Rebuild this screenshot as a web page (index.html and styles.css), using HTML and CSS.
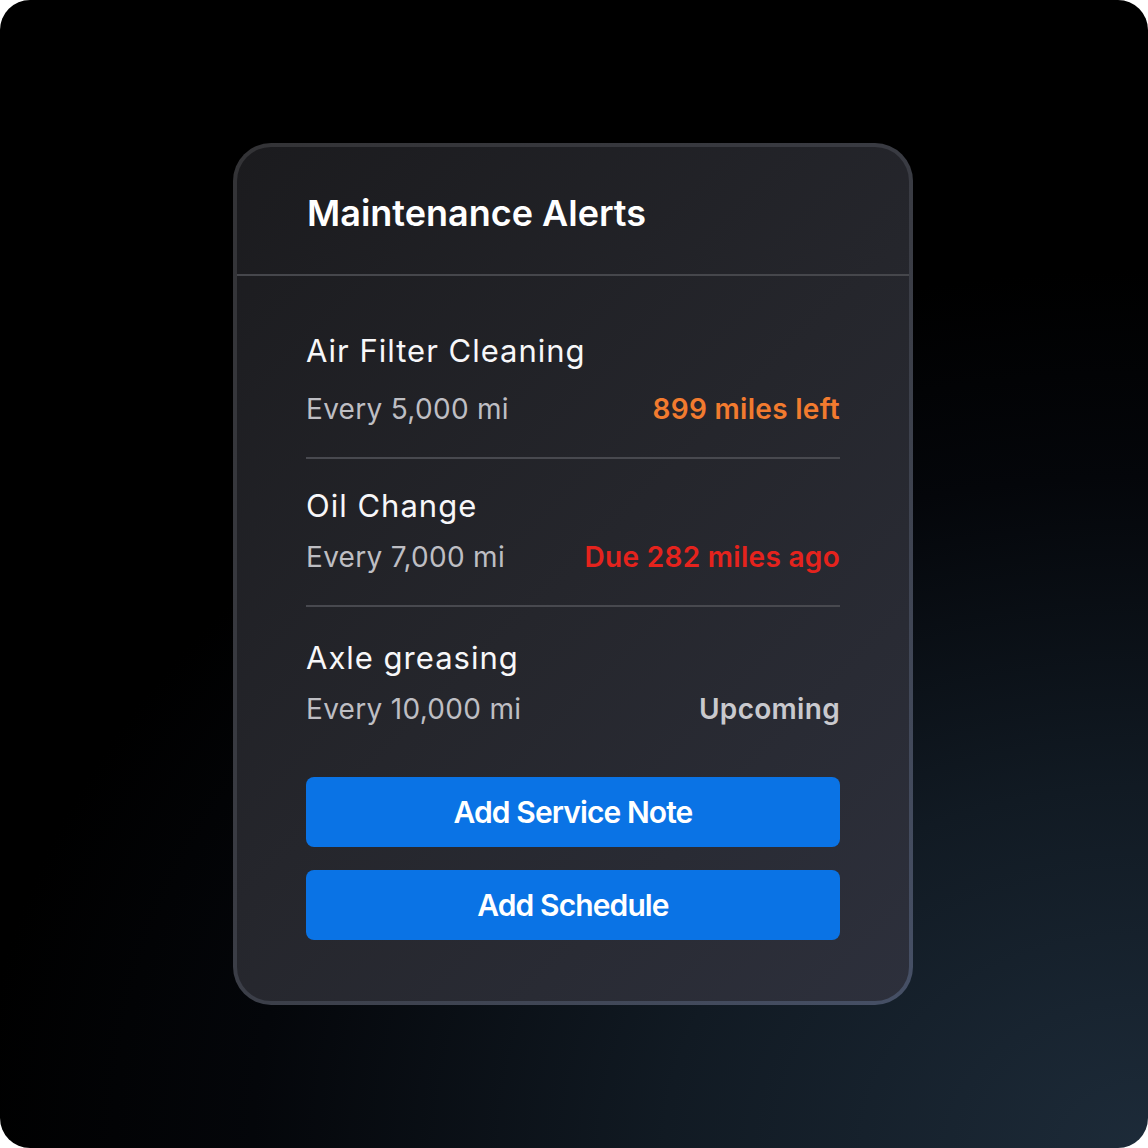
FILE: index.html
```html
<!DOCTYPE html>
<html lang="en">
<head>
    <meta charset="UTF-8">
    <meta name="viewport" content="width=device-width, initial-scale=1.0">
    <title>Maintenance Alerts</title>
    <link rel="stylesheet" href="styles.css">
</head>
<body>
    <div class="frame">
        <div class="card">
            <div class="card-header">
                <h1>Maintenance Alerts</h1>
            </div>

            <div class="alert-list">
                <div class="item">
                    <div class="item-title">Air Filter Cleaning</div>
                    <div class="item-row">
                        <span class="item-sub">Every 5,000 mi</span>
                        <span class="status soon">899 miles left</span>
                    </div>
                </div>
                <div class="item">
                    <div class="item-title">Oil Change</div>
                    <div class="item-row">
                        <span class="item-sub">Every 7,000 mi</span>
                        <span class="status overdue">Due 282 miles ago</span>
                    </div>
                </div>
                <div class="item">
                    <div class="item-title">Axle greasing</div>
                    <div class="item-row">
                        <span class="item-sub">Every 10,000 mi</span>
                        <span class="status upcoming">Upcoming</span>
                    </div>
                </div>
            </div>

            <div class="actions">
                <button class="btn">Add Service Note</button>
                <button class="btn">Add Schedule</button>
            </div>
        </div>
    </div>
</body>
</html>
```

FILE: styles.css
```css
body {
    margin: 0;
    background-color: #fff;
    font-family: Inter, 'Noto Sans', sans-serif;
}

.frame {
    width: 1148px;
    height: 1148px;
    border-radius: 30px;
    overflow: hidden;
    display: flex;
    align-items: center;
    justify-content: center;
    background: radial-gradient(ellipse 120% 90% at 100% 100%, #1d2b39 0%, #111a23 35%, #04060a 65%, #000 85%);
}

.card {
    width: 680px;
    margin-right: 2px;
    box-sizing: border-box;
    border: 4px solid transparent;
    border-radius: 38px;
    background:
        linear-gradient(135deg, #1b1b1e 0%, #25262c 50%, #2d303c 100%) padding-box,
        linear-gradient(135deg, #333336 0%, #3a3c44 50%, #465066 100%) border-box;
    padding-bottom: 61px;
}

.card-header {
    padding: 44px 69px 39px 70px;
    border-bottom: 2px solid #46474c;
}

.card-header h1 {
    margin: 0;
    font-size: 36px;
    line-height: 44px;
    font-weight: 600;
    color: #fff;
}

.alert-list {
    padding: 28px 69px 0 69px;
}

.item {
    padding: 28px 0 32px;
    border-bottom: 2px solid #48494f;
}

.item:last-child {
    border-bottom: none;
    padding-top: 32px;
    padding-bottom: 0;
}

.item-title {
    font-size: 31px;
    line-height: 38px;
    letter-spacing: 1px;
    color: #f7f7f9;
}

.item-row {
    display: flex;
    justify-content: space-between;
    align-items: baseline;
    margin-top: 16px;
}

.item:first-child .item-row {
    margin-top: 23px;
}

.item-sub {
    font-size: 28px;
    line-height: 32px;
    color: #bebec3;
    letter-spacing: 0.3px;
}

.status {
    font-size: 28px;
    line-height: 32px;
    font-weight: 600;
    letter-spacing: 0.3px;
}

.soon {
    color: #f27b2f;
}

.overdue {
    color: #e5231d;
}

.upcoming {
    color: #c9c9ce;
}

.actions {
    display: flex;
    flex-direction: column;
    gap: 23px;
    padding: 52px 69px 0 69px;
}

.btn {
    height: 70px;
    border: none;
    border-radius: 8px;
    background-color: #0a73e5;
    color: #fff;
    font-family: inherit;
    font-size: 30px;
    font-weight: 600;
    letter-spacing: -0.9px;
    cursor: pointer;
}
```
